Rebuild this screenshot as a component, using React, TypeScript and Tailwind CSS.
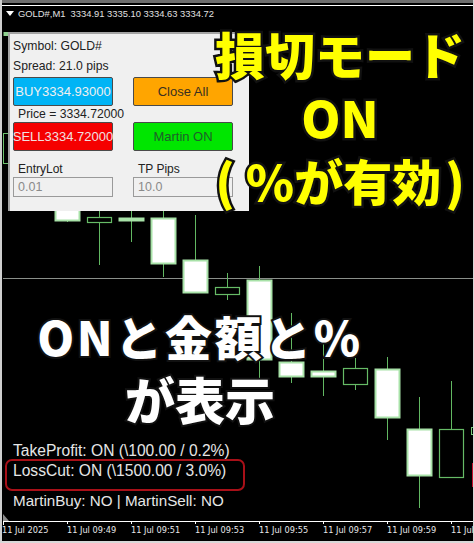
const candles = [
  { x: 55, top: 205, bottom: 220, wickTop: 205, wickBottom: 222, solid: true },
  { x: 87, top: 217, bottom: 222, wickTop: 205, wickBottom: 265, solid: false },
  { x: 119, top: 218, bottom: 220, wickTop: 205, wickBottom: 242, solid: true },
  { x: 151, top: 218, bottom: 263, wickTop: 205, wickBottom: 277, solid: true },
  { x: 183, top: 260, bottom: 292, wickTop: 215, wickBottom: 293, solid: true },
  { x: 215, top: 287, bottom: 294, wickTop: 273, wickBottom: 300, solid: false },
  { x: 247, top: 280, bottom: 359, wickTop: 266, wickBottom: 379, solid: true },
  { x: 279, top: 362, bottom: 376, wickTop: 313, wickBottom: 383, solid: true },
  { x: 311, top: 371, bottom: 376, wickTop: 343, wickBottom: 396, solid: true },
  { x: 343, top: 368, bottom: 384, wickTop: 358, wickBottom: 390, solid: false },
  { x: 375, top: 369, bottom: 417, wickTop: 357, wickBottom: 440, solid: true },
  { x: 407, top: 429, bottom: 475, wickTop: 397, wickBottom: 508, solid: true },
  { x: 439, top: 429, bottom: 477, wickTop: 381, wickBottom: 477, solid: false },
]

const timeLabels = ['11 Jul 09:49', '11 Jul 09:51', '11 Jul 09:53', '11 Jul 09:55', '11 Jul 09:57', '11 Jul 09:59', '11 Jul']

function Chart() {
  return (
    <svg className="absolute left-0 top-0" width="474" height="543" viewBox="0 0 474 543">
      <line x1="3" y1="278.5" x2="473" y2="278.5" stroke="#8a8f8a" />
      {/* 左端に隠れているローソク足 */}
      <rect x="3.5" y="133.5" width="20" height="30" fill="none" stroke="#6fc46f" />
      <rect x="3.5" y="32" width="20" height="4" fill="#8fd08f" />
      {candles.map((c) => (
        <g key={c.x}>
          <line x1={c.x + 12.5} y1={c.wickTop} x2={c.x + 12.5} y2={c.wickBottom} stroke="#62b862" />
          <rect
            x={c.x + 0.5}
            y={c.top + 0.5}
            width="24"
            height={c.bottom - c.top}
            fill={c.solid ? '#ffffff' : '#000000'}
            stroke={c.solid ? '#a8e2a8' : '#66bb66'}
            strokeWidth={c.solid ? 2 : 1.2}
          />
        </g>
      ))}
      {/* 右端で切れている足 */}
      <rect x="471.5" y="427.5" width="3" height="7" fill="none" stroke="#7ccb7c" />
      <rect x="472" y="463" width="2" height="24" fill="#c8102e" />
      <path d="M3 514 L9 521 L3 521 Z" fill="#8c8c8c" />
    </svg>
  )
}

function PanelButton({ label, color, text }: { label: string; color: string; text: string }) {
  return (
    <div className={`flex h-[29px] w-[100px] items-center justify-center whitespace-nowrap rounded-[2px] border border-[#4a4a4a] text-[13px] leading-none ${color} ${text}`}>
      {label}
    </div>
  )
}

function Field({ label, value }: { label: string; value: string }) {
  return (
    <div className="flex w-[100px] flex-col">
      <span className="pl-[5px] text-[12px] leading-[16px] text-[#222222]">{label}</span>
      <div className="flex h-[20px] items-center border border-[#9a9a9a] pl-1 text-[12.5px] leading-none text-[#8a8a8a]">{value}</div>
    </div>
  )
}

function Panel() {
  return (
    <div className="absolute left-[8px] top-[32px] flex h-[179px] w-[241px] flex-col border-l-2 border-t-2 border-[#a3a3a3] bg-[#f0f0f0] pl-[3px] font-['Liberation_Sans',sans-serif] text-[#222222]">
      <div className="mt-[2px] text-[12.2px] leading-[20px]">Symbol: GOLD#</div>
      <div className="text-[12.2px] leading-[20px]">Spread: 21.0 pips</div>
      <div className="mt-[1px] flex gap-[20px]">
        <PanelButton label="BUY3334.93000" color="bg-[#00b4f5]" text="text-[#f0f0f0]" />
        <PanelButton label="Close All" color="bg-[#ffa500]" text="text-[#3a3020]" />
      </div>
      <div className="h-[16px] pl-[5px] text-[12.2px] leading-[16px]">Price = 3334.72000</div>
      <div className="flex gap-[20px]">
        <PanelButton label="SELL3334.72000" color="bg-[#f50000]" text="text-[#f0e0e0]" />
        <PanelButton label="Martin ON" color="bg-[#00e600]" text="text-[#1f5f2a]" />
      </div>
      <div className="mt-[10px] flex gap-[20px]">
        <Field label="EntryLot" value="0.01" />
        <Field label="TP Pips" value="10.0" />
      </div>
    </div>
  )
}

function Captions() {
  return (
    <>
      <div className="absolute left-[203px] top-[22px] flex w-[274px] flex-col items-center font-['Noto_Sans_CJK_JP',sans-serif] text-[50px] font-black leading-[63px] text-[#ffff00] [-webkit-text-stroke:5px_#111111] [paint-order:stroke_fill]">
        <span className="whitespace-nowrap">損切モード</span>
        <span className="whitespace-nowrap">ON</span>
        <span className="flex whitespace-nowrap text-[49px]">
          <span className="mr-[11px]">(</span>
          %が有効
          <span className="ml-[4px]">)</span>
        </span>
      </div>
      <div className="absolute left-0 top-[305px] flex w-[400px] flex-col items-center font-['Noto_Sans_CJK_JP',sans-serif] font-black text-white [-webkit-text-stroke:4px_#111111] [paint-order:stroke_fill]">
        <span className="whitespace-nowrap text-[47px] leading-[62px] tracking-[2.6px]">ONと金額と%</span>
        <span className="whitespace-nowrap text-[50px] leading-[62px]">が表示</span>
      </div>
    </>
  )
}

function Status() {
  return (
    <div className="absolute left-[13px] top-[441px] flex flex-col font-['Liberation_Sans',sans-serif] text-[15.6px] leading-[20px] text-[#e6e6e6]">
      <span>TakeProfit: ON (\100.00 / 0.2%)</span>
      <span>LossCut: ON (\1500.00 / 3.0%)</span>
      <span className="mt-[10px] text-[15.2px]">MartinBuy: NO | MartinSell: NO</span>
      <div className="absolute -left-[8px] top-[18px] h-[32px] w-[240px] rounded-[7px] border-2 border-[#a81018]" />
    </div>
  )
}

export default function App() {
  return (
    <div className="relative h-[543px] w-[474px] overflow-hidden bg-black">
      <Chart />
      <div className="absolute left-0 top-0 h-[3px] w-full bg-[#6e6e6e]" />
      <div className="absolute left-0 top-[5px] h-[1px] w-full bg-white" />
      <div className="absolute left-0 top-0 h-full w-[2px] bg-[#cfcfcf]" />
      <div className="absolute right-0 top-0 h-full w-[1px] bg-[#d8d8d8]" />
      <div className="absolute bottom-0 left-0 h-[2px] w-full bg-[#d8d8d8]" />

      <div className="absolute left-[6px] top-[11px] h-0 w-0 border-x-[4px] border-t-[5px] border-x-transparent border-t-white" />
      <div className="absolute left-[18px] top-[7px] whitespace-pre font-['Liberation_Sans',sans-serif] text-[9.4px] leading-[14px] text-[#e0e0e0]">
        GOLD#,M1  3334.91 3335.10 3334.63 3334.72
      </div>

      <Panel />
      <Captions />
      <Status />

      {/* 時間軸 */}
      <div className="absolute left-[3px] top-[521px] h-[1px] w-[470px] bg-white" />
      <div className="absolute left-[3px] top-[522px] h-[3px] w-[1px] bg-white" />
      <div className="absolute left-[2px] top-[524px] flex font-['DejaVu_Sans',sans-serif] text-[8.2px] leading-[12px] text-[#e8e8e8]">
        <span className="w-[65px] whitespace-nowrap">11 Jul 2025</span>
        {timeLabels.map((t) => (
          <span key={t} className="relative w-[64px] whitespace-nowrap">
            <span className="absolute -top-[3px] left-0 h-[3px] w-[1px] bg-white" />
            {t}
          </span>
        ))}
      </div>
    </div>
  )
}
